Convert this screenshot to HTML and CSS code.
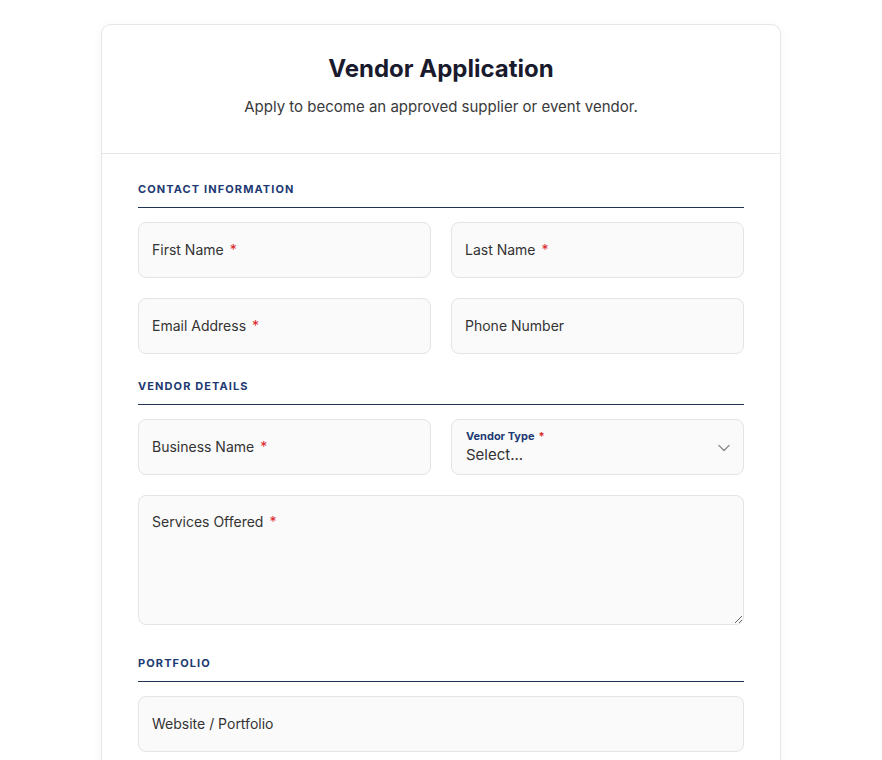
FILE: index.html
```html
<!DOCTYPE html>
<html lang="en">
<head>
<meta charset="utf-8">
<title>Vendor Application</title>
<link rel="stylesheet" href="styles.css">
</head>
<body>
<div class="card">
  <header class="card-header">
    <h1 class="title">Vendor Application</h1>
    <p class="subtitle">Apply to become an approved supplier or event vendor.</p>
  </header>
  <form class="card-body">
    <h2 class="section-title">Contact Information</h2>
    <div class="row">
      <label class="field"><span class="label">First Name<span class="req">*</span></span></label>
      <label class="field"><span class="label">Last Name<span class="req">*</span></span></label>
    </div>
    <div class="row">
      <label class="field"><span class="label">Email Address<span class="req">*</span></span></label>
      <label class="field"><span class="label">Phone Number</span></label>
    </div>

    <h2 class="section-title">Vendor Details</h2>
    <div class="row">
      <label class="field"><span class="label">Business Name<span class="req">*</span></span></label>
      <label class="field field-select">
        <span class="float-label">Vendor Type<span class="req">*</span></span>
        <span class="select-value">Select...</span>
        <svg class="chevron" width="14" height="14" viewBox="0 0 14 14" fill="none" stroke="#8a8a8a" stroke-width="1.3" stroke-linecap="round" stroke-linejoin="round"><path d="M2 4.5l5 5 5-5"/></svg>
      </label>
    </div>
    <div class="textarea-wrap">
      <textarea class="textarea" aria-label="Services Offered"></textarea>
      <span class="label textarea-label">Services Offered<span class="req">*</span></span>
    </div>

    <h2 class="section-title">Portfolio</h2>
    <div class="row single">
      <label class="field"><span class="label">Website / Portfolio</span></label>
    </div>
  </form>
</div>
</body>
</html>
```

FILE: styles.css
```css
* { box-sizing: border-box; }
html, body { margin: 0; padding: 0; background: #ffffff; }
body {
  font-family: Inter, "Noto Sans", "Liberation Sans", sans-serif;
  color: #333;
}
.card {
  width: 680px;
  margin: 24px auto 0;
  background: #fff;
  border: 1px solid #e5e7eb;
  border-radius: 10px;
  box-shadow: 0 2px 10px rgba(0,0,0,0.05);
  min-height: 800px;
}
.card-header {
  text-align: center;
  padding: 29px 24px 35px;
  border-bottom: 1px solid #e5e7eb;
}
.title {
  margin: 0;
  font-size: 24px;
  line-height: 30px;
  font-weight: 700;
  color: #1a1a2e;
}
.subtitle {
  margin: 12px 0 0;
  font-size: 15px;
  line-height: 22px;
  color: #3a3a3a;
}
.card-body {
  padding: 27px 36px 40px;
  display: block;
}
.section-title {
  margin: 0 0 14px;
  padding-bottom: 9px;
  border-bottom: 1px solid #1e3452;
  font-size: 11px;
  line-height: 17px;
  font-weight: 700;
  letter-spacing: 1.1px;
  text-transform: uppercase;
  color: #1e3a72;
}
.row + .section-title { margin-top: 24px; }
.row {
  display: grid;
  grid-template-columns: 1fr 1fr;
  gap: 20px;
  margin-bottom: 20px;
}
.row.single { grid-template-columns: 1fr; }
.field {
  position: relative;
  display: flex;
  align-items: center;
  height: 56px;
  padding: 0 13px;
  background: #fafafa;
  border: 1px solid #e4e4e7;
  border-radius: 8px;
}
.label {
  font-size: 14px;
  line-height: 20px;
  color: #333;
}
.req {
  color: #dc2626;
  margin-left: 6px;
}
.field-select {
  flex-direction: column;
  align-items: flex-start;
  justify-content: flex-start;
  padding: 8px 14px 0;
}
.float-label {
  font-size: 11px;
  line-height: 16px;
  font-weight: 700;
  color: #1e3a72;
}
.float-label .req { margin-left: 4px; }
.select-value {
  font-size: 15px;
  line-height: 22px;
  color: #333;
}
.chevron {
  position: absolute;
  right: 12px;
  top: 21px;
}
.textarea-wrap {
  position: relative;
  margin-bottom: 30px;
}
.textarea {
  display: block;
  width: 100%;
  height: 130px;
  margin: 0;
  background: #fafafa;
  border: 1px solid #e4e4e7;
  border-radius: 8px;
  font-family: inherit;
  resize: vertical;
}
.textarea-label {
  position: absolute;
  left: 14px;
  top: 17px;
}
```
